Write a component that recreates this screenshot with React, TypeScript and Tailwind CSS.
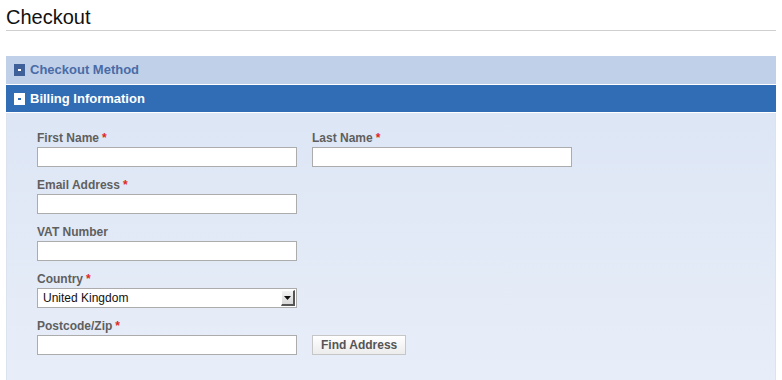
import React from 'react';

const font = { fontFamily: '"Liberation Sans", Arial, sans-serif' };

function Label({ text, required }: { text: string; required?: boolean }) {
  return (
    <label className="block h-[17px] text-[12px] leading-[17px] font-bold text-[#5f5f5f]">
      {text}
      {required && <span className="text-[#e0281c] ml-[3px]">*</span>}
    </label>
  );
}

function TextInput() {
  return <input type="text" className="block w-[260px] h-[20px] bg-white border border-[#acacac] outline-none" />;
}

function Toggle({ active }: { active?: boolean }) {
  return (
    <span
      className={
        'flex items-center justify-center w-[11px] h-[12px] ' +
        (active ? 'bg-white' : 'bg-[#40609a]')
      }
    >
      <span className={'block w-[3px] h-[2px] ' + (active ? 'bg-[#316db4]' : 'bg-white')} />
    </span>
  );
}

export default function App() {
  return (
    <div className="bg-white w-[782px] h-[380px] overflow-hidden" style={font}>
      <div className="px-[6px]">
        {/* Title */}
        <h1 className="text-[20px] leading-[24px] text-[#111] pt-[5px] pb-[1px] border-b border-[#cfcfcf]">Checkout</h1>

        <div className="mt-[25px] w-[770px]">
          {/* Checkout Method */}
          <div className="flex items-center gap-[5px] h-[28px] px-[8px] bg-[#c0d0e8]">
            <Toggle />
            <span className="text-[13px] font-bold text-[#4a6ba6]">Checkout Method</span>
          </div>
          {/* Billing Information */}
          <div className="mt-[1px] flex items-center gap-[5px] h-[27px] px-[8px] bg-[#316db4]">
            <Toggle active />
            <span className="text-[13px] font-bold text-white">Billing Information</span>
          </div>

          {/* Form */}
          <div className="mt-[1px] h-[300px] bg-gradient-to-b from-[#dde6f5] to-[#e9eff9] border-x border-[#dbe3ef] pt-[17px] pl-[30px]">
            <div className="flex gap-[15px] mb-[10px]">
              <div>
                <Label text="First Name" required />
                <TextInput />
              </div>
              <div>
                <Label text="Last Name" required />
                <TextInput />
              </div>
            </div>
            <div className="mb-[10px]">
              <Label text="Email Address" required />
              <TextInput />
            </div>
            <div className="mb-[10px]">
              <Label text="VAT Number" />
              <TextInput />
            </div>
            <div className="mb-[10px]">
              <Label text="Country" required />
              <div className="flex items-center w-[260px] h-[20px] bg-white border border-[#acacac] pl-[5px] pr-[1px]">
                <span className="flex-1 text-[12px] text-[#111]">United Kingdom</span>
                <span className="flex items-center justify-center w-[14px] h-[16px] bg-gradient-to-b from-[#f4f4f4] to-[#d8d8d8] border-t border-l border-white border-r-2 border-b-2 border-r-[#555] border-b-[#555]">
                  <svg width="7" height="4" viewBox="0 0 7 4">
                    <path d="M0 0h7L3.5 4z" fill="#111" />
                  </svg>
                </span>
              </div>
            </div>
            <div>
              <Label text="Postcode/Zip" required />
              <div className="flex gap-[15px]">
                <TextInput />
                <button className="h-[20px] px-[8px] text-[12px] font-bold text-[#555] bg-gradient-to-b from-white to-[#ececec] border border-[#c6c6c6]">
                  Find Address
                </button>
              </div>
            </div>
          </div>
        </div>
      </div>
    </div>
  );
}
